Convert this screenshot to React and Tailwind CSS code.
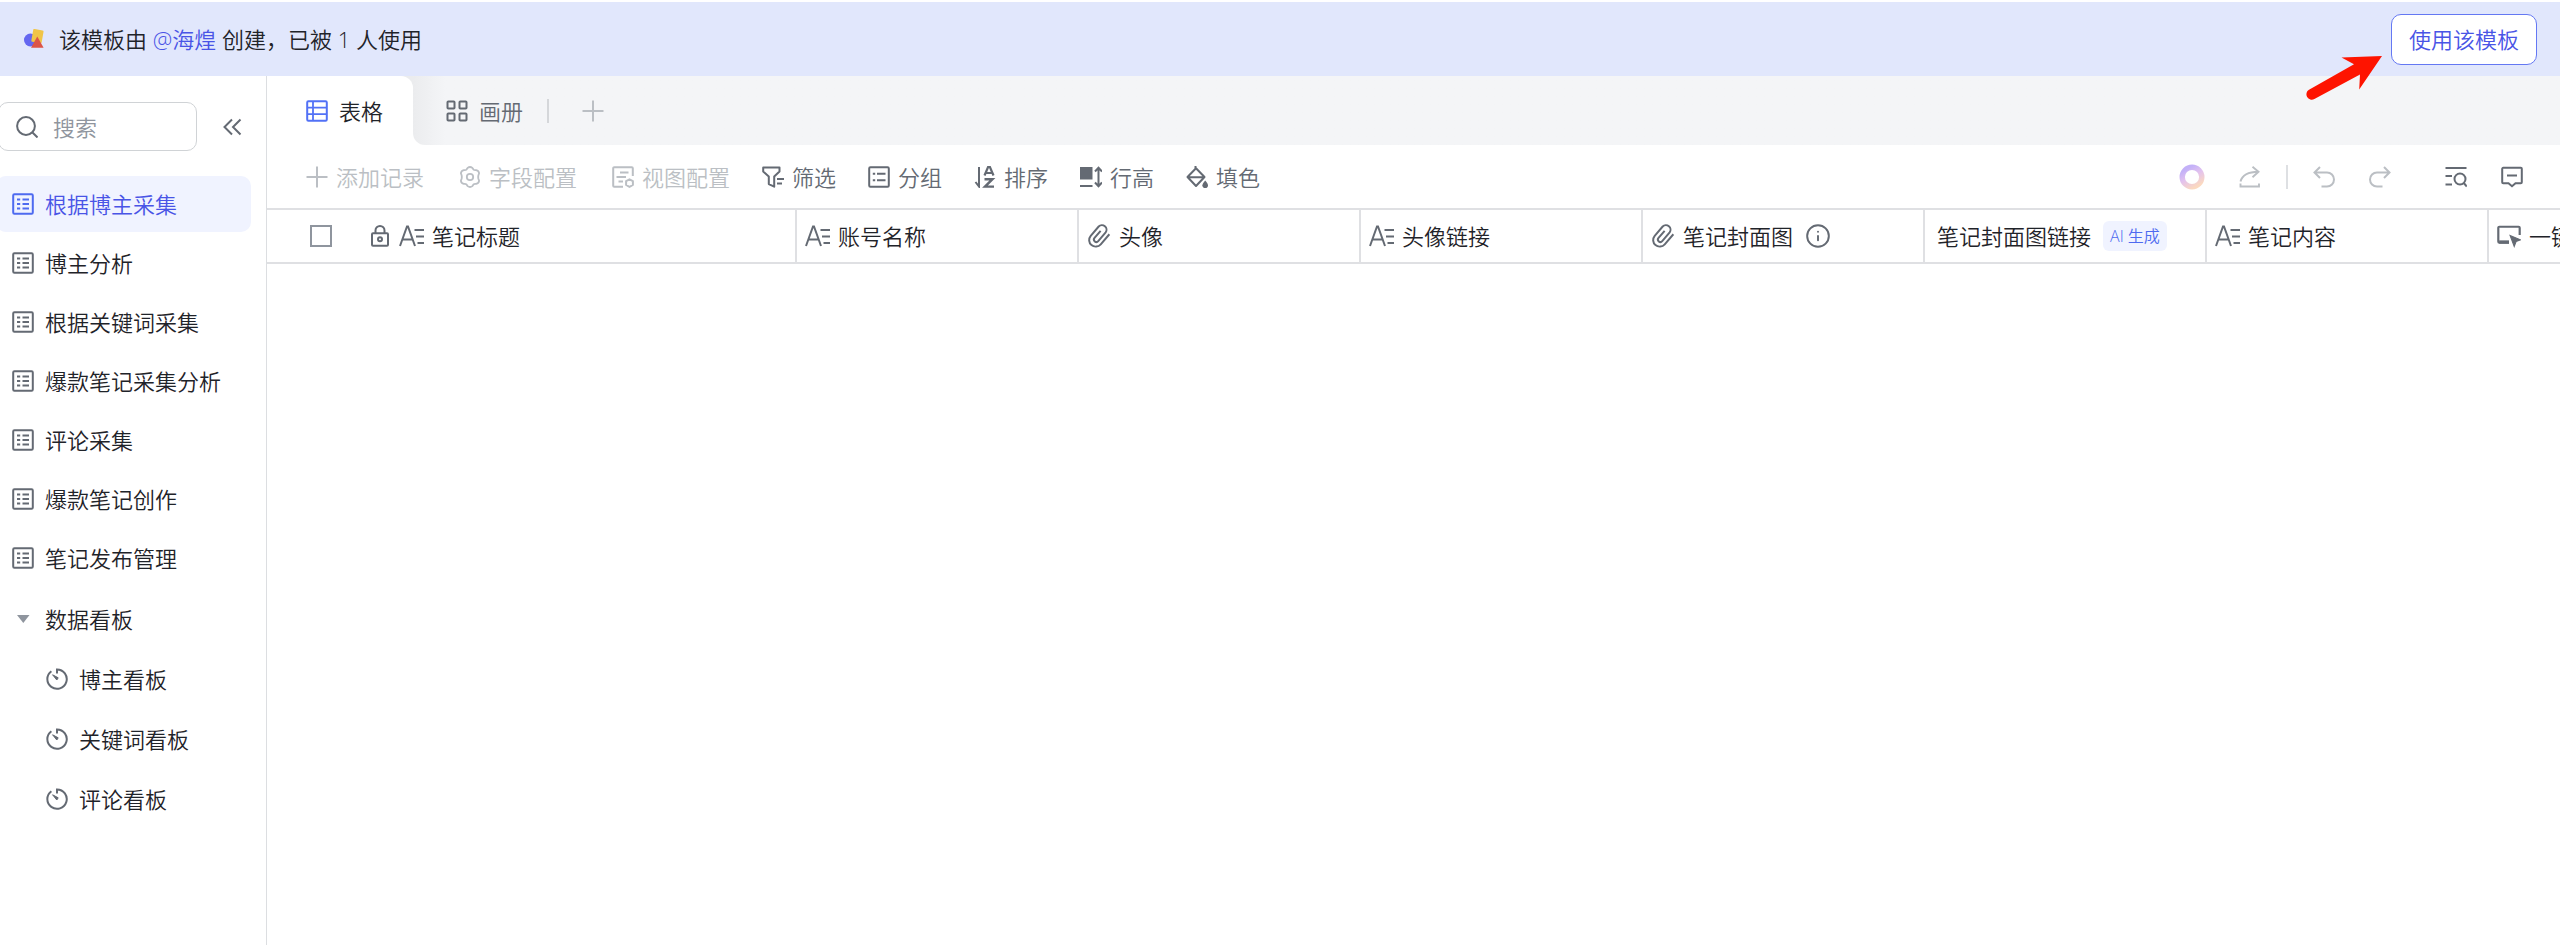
import { Info } from "lucide-react";

function Icon({ children, className = "", size = "size-[22px]", sw = 2 }) {
  return (
    <svg
      viewBox="0 0 22 22"
      fill="none"
      stroke="currentColor"
      strokeWidth={sw}
      aria-hidden="true"
      className={`${size} shrink-0 ${className}`}
    >
      {children}
    </svg>
  );
}

const SheetIcon = ({ className }) => (
  <Icon className={className}>
    <rect x="1.2" y="1.2" width="19.6" height="19.6" rx="1.2" />
    <path d="M5 6.5h3.2M10.5 6.5H17M5 11h3.2M10.5 11H17M5 15.5h3.2M10.5 15.5H17" strokeWidth="1.8" />
  </Icon>
);

const DashboardIcon = () => (
  <Icon className="text-[#646a73]">
    <path d="M11 5.400V1.400a9.700 9.700 0 1 1-5.600 1.800" />
    <path d="M6.600 6.800l5.600 3-1.400 2.200z" fill="currentColor" strokeWidth="1" />
  </Icon>
);

const PlusIcon = ({ className }) => (
  <Icon className={className}>
    <path d="M11 0.5v21M0.5 11h21" />
  </Icon>
);

const GridViewIcon = () => (
  <Icon className="text-[#5271f6]">
    <rect x="1.2" y="1.2" width="19.6" height="19.6" rx="1.2" />
    <path d="M7 1v20M1 7.6h20M1 14.2h20" strokeWidth="1.8" />
  </Icon>
);

const GalleryIcon = () => (
  <Icon className="text-[#646a73]">
    <rect x="1.5" y="1.5" width="7" height="7" rx="0.8" />
    <rect x="13.5" y="1.5" width="7" height="7" rx="0.8" />
    <rect x="1.5" y="13.5" width="7" height="7" rx="0.8" />
    <rect x="13.5" y="13.5" width="7" height="7" rx="0.8" />
  </Icon>
);

const GearIcon = () => (
  <Icon>
    <path d="M8.600 1.900q2.400-1.800 4.800 0l1.100 1.700q.8.700 2.700.5 2.500.6 2.900 3.100l-.7 2q-.4 1.800 0 3.600l.7 2q-.4 2.500-2.900 3.100-1.900-.2-2.700.5l-1.100 1.700q-2.400 1.800-4.800 0l-1.100-1.700q-.8-.7-2.700-.5-2.500-.6-2.900-3.100l.7-2q.4-1.800 0-3.600l-.7-2q.4-2.500 2.900-3.100 1.900.2 2.700-.5z" strokeWidth="1.800" strokeLinejoin="round" />
    <circle cx="11" cy="11" r="3.200" strokeWidth="1.800" />
  </Icon>
);

const ViewConfigIcon = () => (
  <Icon>
    <path d="M11 20.800H2.200a1 1 0 0 1-1-1V2.200a1 1 0 0 1 1-1h17.600a1 1 0 0 1 1 1V10" />
    <path d="M8 6.500h8.500M4.500 11h9.500M6.500 15.500H11" strokeWidth="1.800" />
    <path d="M17.500 13.300l3.400 1.900v3.800l-3.400 1.900-3.400-1.900v-3.800z" strokeLinejoin="round" />
  </Icon>
);

const FilterIcon = () => (
  <Icon>
    <path d="M1.200 1.500h16.300v4l-5.300 5v10.200l-5.400-2.600v-7.600l-5.600-5z" strokeLinejoin="round" />
    <path d="M15 13h7M15 17.500h5" />
  </Icon>
);

const GroupIcon = () => (
  <Icon>
    <rect x="1.200" y="1.200" width="19.600" height="19.600" rx="1.200" />
    <path d="M4.800 7.700h2.400M9 7.700h8.500M4.800 14.300h2.400M9 14.300h8.500" />
  </Icon>
);

const SortIcon = () => (
  <Icon>
    <path d="M5 1v19.500L1.500 16" />
    <path d="M10.500 9.500l3.800-9h1.400l3.800 9M12 7h6" strokeWidth="2.200" />
    <path d="M10.500 13.200h8l-7.500 7.400h9" strokeWidth="2.400" />
  </Icon>
);

const RowHeightIcon = () => (
  <Icon>
    <path d="M0 1h12.500v12.500H0z" fill="currentColor" stroke="none" />
    <path d="M0 20h12.500M18.500 2v18M15 5.500l3.500-3.700L22 5.500M15 16.500l3.500 3.700 3.500-3.700" />
  </Icon>
);

const FillIcon = () => (
  <Icon>
    <path d="M10 2.200l8.500 8.800-8.500 9-8.500-9zM1.500 11.200h17M9.500 0v2.500" strokeLinejoin="round" />
    <path d="M19.200 14.500q2.800 3.400 2.800 4.700a2.800 2.800 0 0 1-5.600 0q0-1.300 2.800-4.700z" fill="currentColor" stroke="none" />
  </Icon>
);

const LockIcon = () => (
  <Icon className="text-[#646a73]">
    <rect x="3" y="8.200" width="16" height="12.600" rx="1" />
    <path d="M6.500 8V5.500a4.500 4.500 0 0 1 9 0V8" />
    <circle cx="11" cy="14.300" r="2" />
  </Icon>
);

const TextFieldIcon = () => (
  <svg viewBox="0 0 25 22" fill="none" stroke="currentColor" strokeWidth="2" aria-hidden="true" className="h-[22px] w-[25px] shrink-0 text-[#646a73]">
    <path d="M1 21L8 1.500h1L16 21M3.500 14.500h10M15.500 5H25M17 11.500h8M18.500 18H25" />
  </svg>
);

const ClipIcon = () => (
  <Icon size="size-6" className="text-[#646a73]">
    <path d="M12.500 6.200l-5.600 6.600a2.200 2.200 0 0 0 3.400 2.900l6.800-8A4.200 4.200 0 0 0 10.700 2.300L3.400 10.800a6 6 0 0 0 9.200 7.800L20.500 9.400" strokeWidth="1.800" />
  </Icon>
);

const ButtonFieldIcon = () => (
  <Icon size="size-6" className="text-[#646a73]">
    <path d="M11 17H2.200a1 1 0 0 1-1-1V3.500a1 1 0 0 1 1-1h17.600a1 1 0 0 1 1 1V10" />
    <path d="M2 16.500h9" strokeWidth="3" />
    <path d="M12 10.500l9.500 4-4 1.600-1.700 4.400z" fill="currentColor" strokeWidth="1" />
  </Icon>
);

const ShareIcon = () => (
  <Icon>
    <path d="M1.500 15.500Q4 6 19.500 5.800M13.500 0.800L19.500 5.800l-6 5.400M1.500 17.500v3h18.500v-3" strokeWidth="1.900" />
  </Icon>
);
const UndoIcon = () => (
  <Icon>
    <path d="M7 1L1.500 6.500 7 12M1.500 6.500H14a7 7 0 0 1 0 14H8.500" />
  </Icon>
);
const RedoIcon = () => (
  <Icon>
    <path d="M15 1l5.500 5.500L15 12M20.500 6.500H8a7 7 0 0 0 0 14h5.500" />
  </Icon>
);
const FindIcon = () => (
  <Icon>
    <path d="M0.500 2h21M0.500 10H7M0.500 18.500H7" />
    <circle cx="15" cy="13" r="5.500" />
    <path d="M18.800 17l3 3.500" />
  </Icon>
);
const CommentIcon = () => (
  <Icon>
    <path d="M2.200 1.800h17.600a1 1 0 0 1 1 1v13.400a1 1 0 0 1-1 1H14.500L11 20.200l-3.500-3H2.200a1 1 0 0 1-1-1V2.800a1 1 0 0 1 1-1zM6 9.500h10" />
  </Icon>
);

const AiRing = () => (
  <svg viewBox="0 0 26 26" aria-hidden="true" className="size-[26px]">
    <defs>
      <linearGradient id="ring" x1="0.200" y1="0.100" x2="0.700" y2="1">
        <stop offset="0" stopColor="#c3b1f8" />
        <stop offset="0.450" stopColor="#e3c2ee" />
        <stop offset="1" stopColor="#fbd9c0" />
      </linearGradient>
    </defs>
    <circle cx="13" cy="13" r="9.800" fill="none" stroke="url(#ring)" strokeWidth="5.400" />
  </svg>
);

const Logo = () => (
  <svg viewBox="0 0 20 20" aria-hidden="true" className="size-5">
    <circle cx="6.400" cy="11" r="6.400" fill="#6467f0" />
    <rect x="8.200" y="0.500" width="10.500" height="13" rx="1.200" fill="#f0c548" transform="rotate(10 13 7)" />
    <path d="M13.300 7.500l6.300 11.300H7z" fill="#dc5548" />
  </svg>
);

const tables = [
  "根据博主采集",
  "博主分析",
  "根据关键词采集",
  "爆款笔记采集分析",
  "评论采集",
  "爆款笔记创作",
  "笔记发布管理",
];
const dashboards = ["博主看板", "关键词看板", "评论看板"];

function Sidebar() {
  return (
    <aside className="w-[267px] shrink-0 border-r border-[#dcdee1] pt-[26px]">
      <div className="flex items-center">
        <label className="-ml-0.5 flex h-[49px] w-[199px] items-center gap-[15px] rounded-[10px] border border-[#d0d3d6] pl-[17px]">
          <Icon className="text-[#646a73]">
            <circle cx="10" cy="10" r="8.900" />
            <path d="M16.500 16.500l5 5" />
          </Icon>
          <input
            type="search"
            aria-label="搜索"
            placeholder="搜索"
            className="w-full min-w-0 bg-transparent outline-none placeholder:text-[#8f959e]"
          />
        </label>
        <button type="button" aria-label="收起侧边栏" className="ml-[25px] text-[#646a73]">
          <Icon>
            <path d="M10 3.500L2.500 11l7.500 7.500M18.500 3.500L11 11l7.500 7.500" />
          </Icon>
        </button>
      </div>
      <nav className="mt-[25px] -ml-1 mr-[15px]">
        <ul className="flex flex-col gap-[3px]">
          {tables.map((name, i) => (
            <li key={name}>
              <a
                href="#"
                aria-current={i === 0 ? "page" : undefined}
                className={`flex h-14 items-center gap-[11px] rounded-[10px] pl-4 ${
                  i === 0 ? "bg-[#f0f3ff] text-[#4954e6]" : ""
                }`}
              >
                <SheetIcon className={i === 0 ? "text-[#4e6af0]" : "text-[#646a73]"} />
                {name}
              </a>
            </li>
          ))}
        </ul>
        <button type="button" aria-expanded="true" className="mt-[5px] flex h-14 w-full items-center gap-[11px] pl-4">
          <Icon className="text-[#8f959e]">
            <path d="M5 7h12.500l-6.200 8z" fill="currentColor" stroke="none" />
          </Icon>
          数据看板
        </button>
        <ul className="mt-1 flex flex-col gap-1">
          {dashboards.map((name) => (
            <li key={name}>
              <a href="#" className="flex h-14 items-center gap-[11px] pl-[50px]">
                <DashboardIcon />
                {name}
              </a>
            </li>
          ))}
        </ul>
      </nav>
    </aside>
  );
}

function ToolButton({ icon, label, disabled }) {
  return (
    <button
      type="button"
      disabled={disabled}
      className={`flex items-center gap-2 ${disabled ? "text-[#bbbfc4]" : "text-[#646a73]"}`}
    >
      {icon}
      {label}
    </button>
  );
}

const columns = [
  { icon: <TextFieldIcon />, label: "账号名称" },
  { icon: <ClipIcon />, label: "头像" },
  { icon: <TextFieldIcon />, label: "头像链接" },
  { icon: <ClipIcon />, label: "笔记封面图", info: true },
  { label: "笔记封面图链接", ai: true },
  { icon: <TextFieldIcon />, label: "笔记内容" },
  { icon: <ButtonFieldIcon />, label: "一键采集" },
];

export default function App() {
  return (
    <div className="flex min-h-screen flex-col bg-white pt-0.5 font-['Open_Sans','Noto_Sans_CJK_SC',sans-serif] text-[22px] leading-8 font-[350] whitespace-nowrap text-[#1f2329]">
      <header className="flex h-[74px] items-center justify-between bg-[#e1e7fc] pr-[23px] pl-6">
        <p className="flex items-center gap-[15px]">
          <Logo />
          <span>
            该模板由 <a href="#" className="text-[#4954e6]">@海煌</a> 创建，已被 1 人使用
          </span>
        </p>
        <div className="relative">
          <button type="button" className="h-[51px] rounded-[10px] border border-[#6478f3] bg-white px-[17px] text-[#4954e6]">
            使用该模板
          </button>
          <svg viewBox="0 0 80 48" aria-hidden="true" className="pointer-events-none absolute top-10 right-full mr-2 h-12 w-20">
            <path d="M79 2L38.500 3.500l12.500 6.800L6 35.700a5.300 5.300 0 0 0 5.400 9.200L57 20.500l-.8 15z" fill="#fe1400" />
          </svg>
        </div>
      </header>

      <div className="flex flex-1">
        <Sidebar />
        <main className="min-w-0 flex-1 overflow-hidden">
          <div className="flex h-[69px]">
            <div className="bg-[#ebecee]">
              <button type="button" aria-pressed="true" className="flex h-full items-center gap-[11px] rounded-tr-[12px] bg-white pr-[30px] pl-[39px]">
                <GridViewIcon />
                表格
              </button>
            </div>
            <div className="flex flex-1 items-center rounded-bl-[12px] bg-linear-to-r from-[#ebecee] to-[#f4f5f7] to-[32px] pl-[33px]">
              <button type="button" aria-pressed="false" className="flex items-center gap-[11px] text-[#646a73]">
                <GalleryIcon />
                画册
              </button>
              <span className="ml-6 h-6 w-0.5 bg-[#d5d7da]" />
              <button type="button" aria-label="添加视图" className="ml-[33px] text-[#bbbfc4]">
                <PlusIcon />
              </button>
            </div>
          </div>

          <div className="flex h-[63px] items-center pr-[37px] pl-[39px]">
            <div className="flex gap-[35px]">
              <ToolButton disabled icon={<PlusIcon />} label="添加记录" />
              <ToolButton disabled icon={<GearIcon />} label="字段配置" />
              <ToolButton disabled icon={<ViewConfigIcon />} label="视图配置" />
            </div>
            <div className="ml-8 flex gap-8">
              <ToolButton icon={<FilterIcon />} label="筛选" />
              <ToolButton icon={<GroupIcon />} label="分组" />
              <ToolButton icon={<SortIcon />} label="排序" />
              <ToolButton icon={<RowHeightIcon />} label="行高" />
              <ToolButton icon={<FillIcon />} label="填色" />
            </div>
            <div className="ml-auto flex items-center gap-[34px] text-[#bbbfc4]">
              <button type="button" aria-label="AI 助手"><AiRing /></button>
              <div className="flex items-center gap-[25px]">
                <button type="button" aria-label="分享"><ShareIcon /></button>
                <span className="h-6 w-0.5 bg-[#dee0e3]" />
                <button type="button" aria-label="撤销"><UndoIcon /></button>
              </div>
              <button type="button" aria-label="重做"><RedoIcon /></button>
              <div className="ml-5 flex gap-[34px] text-[#646a73]">
                <button type="button" aria-label="查找"><FindIcon /></button>
                <button type="button" aria-label="评论"><CommentIcon /></button>
              </div>
            </div>
          </div>

          <table className="w-[2504px] table-fixed border-separate border-spacing-0">
            <thead>
              <tr className="h-14 *:border-y-2 *:border-[#dfe0e3] *:p-0 *:text-left *:font-[350]">
                <th scope="col" className="w-20">
                  <input
                    type="checkbox"
                    aria-label="全选"
                    className="ml-[43px] block size-[22px] appearance-none border-2 border-[#8f959e] bg-white"
                  />
                </th>
                <th scope="col" className="w-[450px] border-r-2 border-r-[#bfc3c9]">
                  <span className="flex items-center gap-2 pl-[22px]">
                    <LockIcon />
                    <TextFieldIcon />
                    笔记标题
                  </span>
                </th>
                {columns.map((c) => (
                  <th key={c.label} scope="col" className="w-[282px] border-r-2">
                    <span className={`flex items-center gap-2 ${c.ai ? "pl-3" : "pl-2"}`}>
                      {c.icon}
                      {c.label}
                      {c.info && <Info className="ml-1 size-[26px] text-[#646a73]" strokeWidth={1.8} />}
                      {c.ai && (
                        <span className="ml-1 rounded-md bg-[#f0f3ff] px-[7px] text-base leading-[30px] text-[#4e6af0]">
                          AI 生成
                        </span>
                      )}
                    </span>
                  </th>
                ))}
              </tr>
            </thead>
          </table>
        </main>
      </div>
    </div>
  );
}
